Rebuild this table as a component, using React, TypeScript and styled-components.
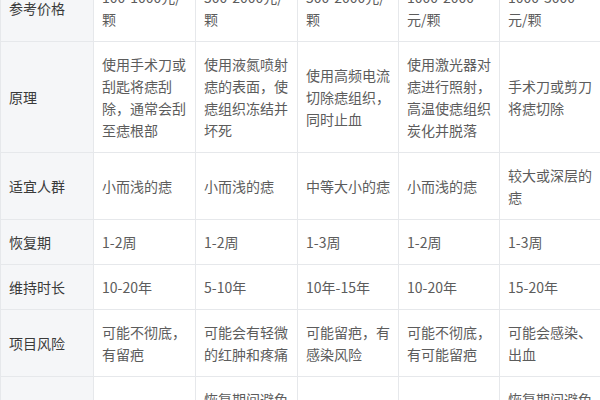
import React from "react";
import styled, { createGlobalStyle } from "styled-components";

const Global = createGlobalStyle`
  html, body { margin: 0; padding: 0; background: #ffffff; }
  body { font-family: "Noto Sans CJK SC", "Noto Sans", sans-serif; }
`;

const Viewport = styled.div`
  width: 600px;
  height: 400px;
  overflow: hidden;
  background: #ffffff;
`;

const Table = styled.table`
  border-collapse: collapse;
  table-layout: fixed;
  width: 600px;
  margin-top: -26px;
  font-size: 14px;
  line-height: 22px;
`;

const Cell = styled.td<{ $head?: boolean }>`
  border: 1px solid #e6e8eb;
  padding: 11px 7px 11px 8px;
  vertical-align: middle;
  text-align: left;
  color: ${(p) => (p.$head ? "#3a3a3a" : "#5c5c5c")};
  background: ${(p) => (p.$head ? "#f5f6f8" : "#ffffff")};
`;

const rows: string[][] = [
  ["参考价格", "100-1000元/颗", "500-2000元/颗", "500-2000元/颗", "1000-2000元/颗", "1000-3000元/颗"],
  [
    "原理",
    "使用手术刀或刮匙将痣刮除，通常会刮至痣根部",
    "使用液氮喷射痣的表面，使痣组织冻结并坏死",
    "使用高频电流切除痣组织，同时止血",
    "使用激光器对痣进行照射，高温使痣组织炭化并脱落",
    "手术刀或剪刀将痣切除",
  ],
  ["适宜人群", "小而浅的痣", "小而浅的痣", "中等大小的痣", "小而浅的痣", "较大或深层的痣"],
  ["恢复期", "1-2周", "1-2周", "1-3周", "1-2周", "1-3周"],
  ["维持时长", "10-20年", "5-10年", "10年-15年", "10-20年", "15-20年"],
  ["项目风险", "可能不彻底，有留疤", "可能会有轻微的红肿和疼痛", "可能留疤，有感染风险", "可能不彻底，有可能留疤", "可能会感染、出血"],
  [
    "注意事项",
    "保持伤口清洁",
    "恢复期间避免沾水，防止感染，按时换药",
    "保持伤口干燥",
    "注意防晒",
    "恢复期间避免剧烈运动，按时拆线",
  ],
];

const widths = [93, 102, 102, 101, 101, 101];

export default function App() {
  return (
    <Viewport>
      <Global />
      <Table>
        <colgroup>
          {widths.map((w, i) => (
            <col key={i} style={{ width: w }} />
          ))}
        </colgroup>
        <tbody>
          {rows.map((r, i) => (
            <tr key={i}>
              {r.map((c, j) => (
                <Cell key={j} $head={j === 0}>
                  {c}
                </Cell>
              ))}
            </tr>
          ))}
        </tbody>
      </Table>
    </Viewport>
  );
}
